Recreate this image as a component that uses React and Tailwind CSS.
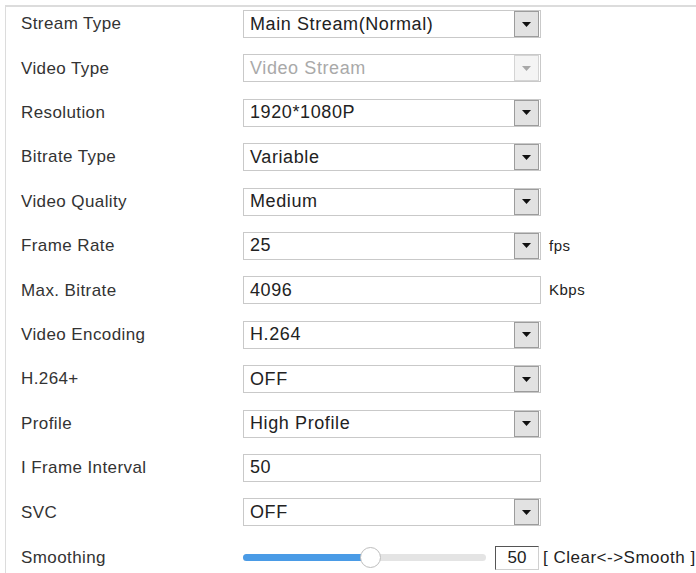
const ROWS = [
  { label: 'Stream Type', type: 'select', value: 'Main Stream(Normal)' },
  { label: 'Video Type', type: 'select', value: 'Video Stream', disabled: true },
  { label: 'Resolution', type: 'select', value: '1920*1080P' },
  { label: 'Bitrate Type', type: 'select', value: 'Variable' },
  { label: 'Video Quality', type: 'select', value: 'Medium' },
  { label: 'Frame Rate', type: 'select', value: '25', unit: 'fps' },
  { label: 'Max. Bitrate', type: 'input', value: '4096', unit: 'Kbps' },
  { label: 'Video Encoding', type: 'select', value: 'H.264' },
  { label: 'H.264+', type: 'select', value: 'OFF' },
  { label: 'Profile', type: 'select', value: 'High Profile' },
  { label: 'I Frame Interval', type: 'input', value: '50' },
  { label: 'SVC', type: 'select', value: 'OFF' },
];

function Arrow({ disabled }) {
  return (
    <div
      className={`flex h-[26px] w-[25px] items-center justify-center border ${
        disabled ? 'border-[#d4d4d4] bg-[#f4f4f4]' : 'border-[#9c9c9c] bg-[#e2e2e2]'
      }`}
    >
      <svg width="9" height="5" viewBox="0 0 9 5">
        <path d="M0 0h9L4.5 5z" fill={disabled ? '#a8a8a8' : '#111'} />
      </svg>
    </div>
  );
}

function Field({ row }) {
  return (
    <div className="flex items-center">
      <div className="flex h-[28px] w-[298px] items-center justify-between border border-[#c9c9c9] bg-white pl-[6px] pr-[1px]">
        <span className={`text-[18px] tracking-[0.6px] ${row.disabled ? 'text-[#a9a9a9]' : 'text-[#222]'}`}>{row.value}</span>
        {row.type === 'select' && <Arrow disabled={row.disabled} />}
      </div>
      {row.unit && <span className="ml-[8px] text-[15px] tracking-[0.5px] text-[#222]">{row.unit}</span>}
    </div>
  );
}

export default function App() {
  return (
    <div className="h-[573px] w-[696px] overflow-hidden bg-white font-['Liberation_Sans',Arial,sans-serif]">
      <div className="ml-[5px] mt-[5px] h-full border-l border-t-2 border-[#dcdcdc] pl-[15px] pt-[3px]">
        {ROWS.map((row) => (
          <div key={row.label} className="flex h-[44.4px] items-start">
            <div className="flex h-[28px] w-[222px] items-center text-[17px] tracking-[0.4px] text-[#333]">{row.label}</div>
            <Field row={row} />
          </div>
        ))}
        <div className="flex h-[44px] items-start pt-[3px]">
          <div className="flex h-[24px] w-[222px] items-center text-[17px] tracking-[0.4px] text-[#333]">Smoothing</div>
          <div className="flex h-[24px] w-[243px] items-center">
            <div className="relative h-[7px] w-full rounded-full bg-[#e4e4e4]">
              <div className="h-full w-[127px] rounded-full bg-[#4a9be6]" />
              <div className="absolute left-[117px] top-[-7px] h-[21px] w-[21px] rounded-full border border-[#bdbdbd] bg-white" />
            </div>
          </div>
          <div className="ml-[9px] flex h-[24px] w-[44px] items-center justify-center border border-[#d0d0d0] border-l-[#555] border-t-[#555] text-[17px] text-[#222]">
            50
          </div>
          <span className="ml-[4px] flex h-[24px] items-center text-[17px] tracking-[0.5px] text-[#222]">[ Clear&lt;-&gt;Smooth ]</span>
        </div>
      </div>
    </div>
  );
}
